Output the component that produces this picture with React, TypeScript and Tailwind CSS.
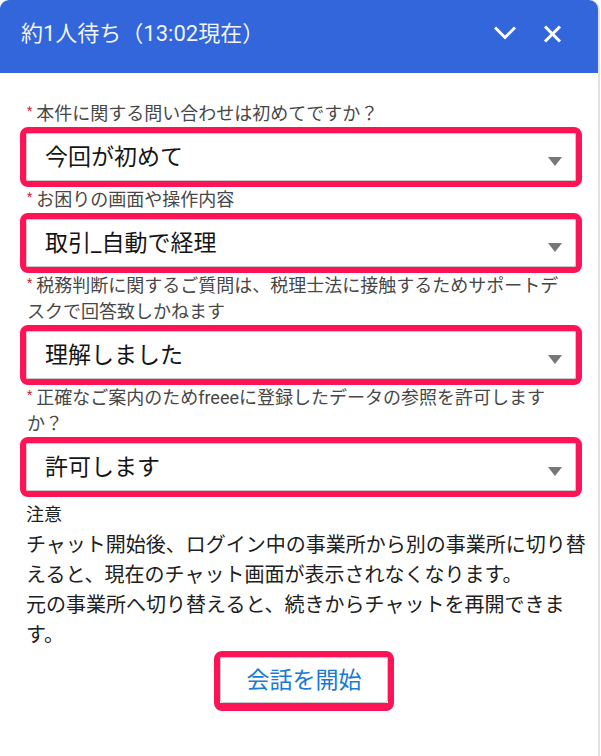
import React from "react";

type Field = {
  lines: string[];
  value: string;
};

const fields: Field[] = [
  { lines: ["本件に関する問い合わせは初めてですか？"], value: "今回が初めて" },
  { lines: ["お困りの画面や操作内容"], value: "取引_自動で経理" },
  {
    lines: [
      "税務判断に関するご質問は、税理士法に接触するためサポートデ",
      "スクで回答致しかねます",
    ],
    value: "理解しました",
  },
  {
    lines: ["正確なご案内のためfreeeに登録したデータの参照を許可します", "か？"],
    value: "許可します",
  },
];

const noteLines = [
  "チャット開始後、ログイン中の事業所から別の事業所に切り替",
  "えると、現在のチャット画面が表示されなくなります。",
  "元の事業所へ切り替えると、続きからチャットを再開できま",
  "す。",
];

function ChevronDown() {
  return (
    <svg width="22" height="15" viewBox="0 0 22 15" fill="none">
      <polyline
        points="2,2.5 11,11.5 20,2.5"
        stroke="white"
        strokeWidth="3"
        strokeLinecap="square"
        strokeLinejoin="miter"
      />
    </svg>
  );
}

function CloseIcon() {
  return (
    <svg width="19" height="18" viewBox="0 0 19 18" fill="none">
      <line x1="2" y1="1.5" x2="17" y2="16.5" stroke="white" strokeWidth="3" />
      <line x1="17" y1="1.5" x2="2" y2="16.5" stroke="white" strokeWidth="3" />
    </svg>
  );
}

function Caret() {
  return (
    <svg width="14" height="9" viewBox="0 0 14 9">
      <polygon points="0,0 14,0 7,9" fill="#777777" />
    </svg>
  );
}

function SelectBox({ value }: { value: string }) {
  return (
    <div className="rounded-[8px] border-[6px] border-[#fd1456]">
      <div className="flex h-[48px] items-center justify-between rounded-[3px] border border-[#c8c8c8] bg-white pl-[18px] pr-[13px]">
        <span className="text-[23px] leading-none text-[#151515]">{value}</span>
        <span className="mt-[8px] flex">
          <Caret />
        </span>
      </div>
    </div>
  );
}

export default function App() {
  return (
    <div
      className="h-[756px] w-[601px] overflow-hidden bg-white"
      style={{ fontFamily: 'Roboto, "Noto Sans CJK JP", sans-serif' }}
    >
      <div className="flex h-[756px] w-[600px] flex-col rounded-t-[10px] border-r-2 border-[#e2e2e2]">
        <header className="flex h-[73px] shrink-0 items-center justify-between rounded-t-[9px] bg-[#3366db] pl-[21px] pr-[36px]">
          <h1 className="mt-[-6px] text-[22px] font-normal leading-none text-white/95">
            約1人待ち（13:02現在）
          </h1>
          <div className="mt-[-6px] flex items-center gap-[27px]">
            <ChevronDown />
            <CloseIcon />
          </div>
        </header>

        <div className="flex flex-col pl-[20px] pr-[16px] pt-[28px]">
          {fields.map((f, i) => (
            <div key={i} className="flex flex-col">
              <div className="flex flex-col pl-[7px] text-[18px] text-[#474747]">
                {f.lines.map((line, j) => (
                  <div key={j} className="flex h-[26px] items-center whitespace-nowrap leading-none">
                    {j === 0 && (
                      <span className="mr-[4px] mt-[-7px] text-[12px] leading-none text-[#cc1f2f]">*</span>
                    )}
                    <span>{line}</span>
                  </div>
                ))}
              </div>
              <SelectBox value={f.value} />
            </div>
          ))}

          <div className="flex flex-col px-[6px] pt-[3px] text-[#202020]">
            <div className="flex h-[30px] items-center text-[18px] leading-none">注意</div>
            {noteLines.map((line, i) => (
              <div key={i} className="flex h-[30px] items-center whitespace-nowrap text-[20px] leading-none">
                {line}
              </div>
            ))}
          </div>

          <div className="flex justify-center pl-[6px] pt-[1px]">
            <div className="rounded-[8px] border-[6px] border-b-[8px] border-[#fd1456]">
              <button className="flex h-[46px] w-[168px] items-center justify-center rounded-[3px] border border-[#c8c8c8] bg-white text-[23px] leading-none text-[#1a78d6]">
                会話を開始
              </button>
            </div>
          </div>
        </div>
      </div>
    </div>
  );
}
